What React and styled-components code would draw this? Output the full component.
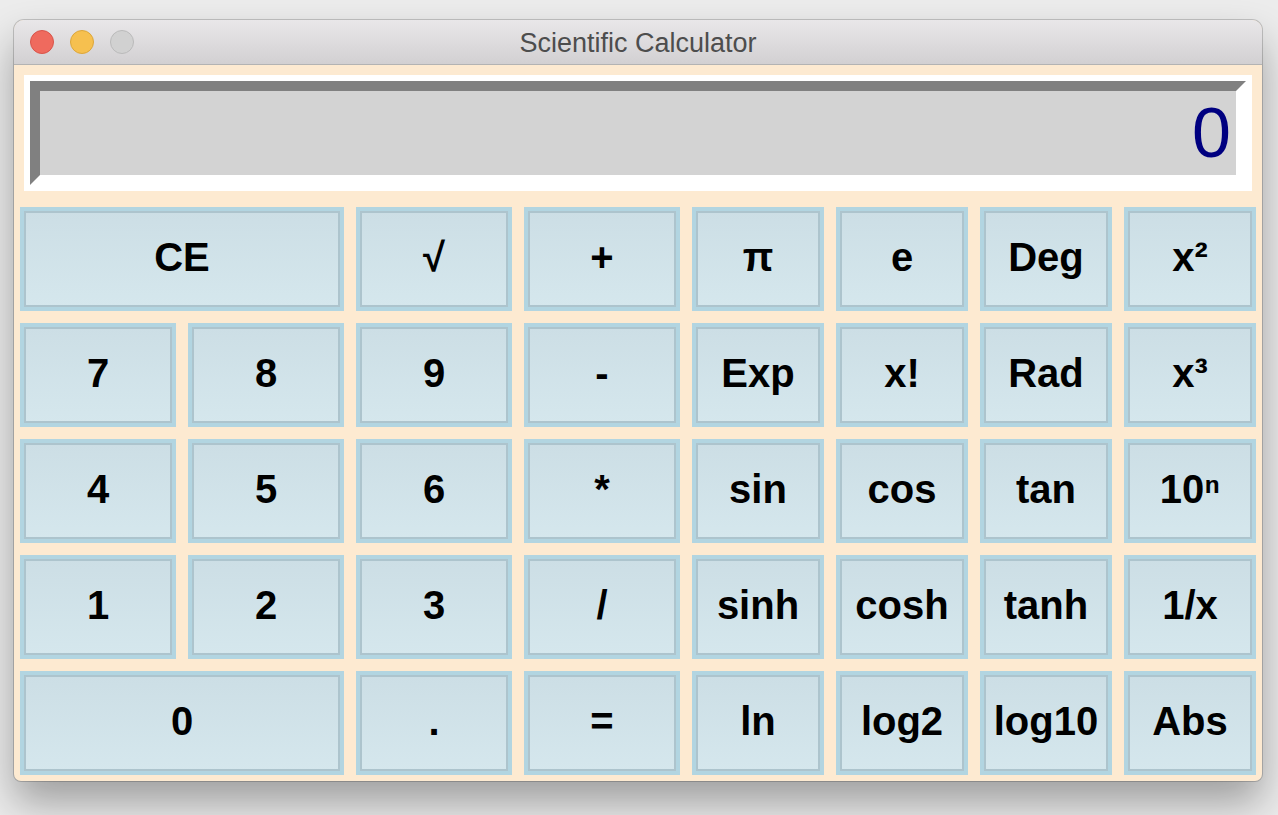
import React from "react";
import styled, { createGlobalStyle } from "styled-components";

const Global = createGlobalStyle`
  html, body { margin: 0; padding: 0; }
  body {
    background: #ececec;
    font-family: "Liberation Sans", Arial, sans-serif;
    width: 1278px;
    height: 815px;
    overflow: hidden;
  }
`;

const Page = styled.div`
  padding: 20px 0 0 14px;
`;

const Window = styled.div`
  width: 1248px;
  display: flex;
  flex-direction: column;
  border-radius: 10px 10px 7px 7px;
  overflow: hidden;
  background: #fdead1;
  box-shadow: 0 0 0 1px rgba(0, 0, 0, 0.18), 0 22px 40px rgba(0, 0, 0, 0.33);
`;

const TitleBar = styled.div`
  height: 44px;
  display: flex;
  align-items: center;
  position: relative;
  background: linear-gradient(#e9e7e9, #d2d0d2);
  border-bottom: 1px solid #b3b3b3;
`;

const Lights = styled.div`
  display: flex;
  gap: 16px;
  padding-left: 16px;
`;

const Light = styled.span`
  width: 22px;
  height: 22px;
  border-radius: 50%;
  background: ${(p) => p.$bg};
  border: 1px solid ${(p) => p.$bd};
`;

const Title = styled.div`
  position: absolute;
  left: 0;
  right: 0;
  top: 8px;
  text-align: center;
  font-size: 27px;
  line-height: 30px;
  color: #4d4d4d;
  pointer-events: none;
`;

const Body = styled.div`
  display: flex;
  flex-direction: column;
  padding: 10px 6px 6px;
`;

const DisplayBox = styled.div`
  margin: 0 4px 16px;
  background: #fff;
  padding: 6px;
`;

const Field = styled.div`
  height: 84px;
  background: #d3d3d3;
  border-style: solid;
  border-width: 10px;
  border-color: #808080 #fff #fff #808080;
  display: flex;
  align-items: center;
  justify-content: flex-end;
  padding-right: 5px;
  color: #000080;
  font-size: 70px;
  line-height: 1;
`;

const Grid = styled.div`
  display: grid;
  grid-template-columns: repeat(4, 156px) repeat(4, 132px);
  grid-auto-rows: 104px;
  gap: 12px;
`;

const Key = styled.button`
  grid-column: span ${(p) => p.$span || 1};
  margin: 0;
  padding: 0 0 4px;
  border: 4px solid #b2d5e1;
  box-shadow: inset 0 0 0 2px #adc4cd;
  background: linear-gradient(#ccdee5, #d5e7ed);
  font-family: "Liberation Sans", Arial, sans-serif;
  font-weight: bold;
  font-size: 40px;
  color: #000;
  display: flex;
  align-items: center;
  justify-content: center;
  cursor: pointer;
`;

const rows = [
  [["CE", 2], "√", "+", "π", "e", "Deg", "x²"],
  ["7", "8", "9", "-", "Exp", "x!", "Rad", "x³"],
  ["4", "5", "6", "*", "sin", "cos", "tan", "10ⁿ"],
  ["1", "2", "3", "/", "sinh", "cosh", "tanh", "1/x"],
  [["0", 2], ".", "=", "ln", "log2", "log10", "Abs"],
];

export default function App() {
  return (
    <>
      <Global />
      <Page>
        <Window>
          <TitleBar>
            <Lights>
              <Light $bg="#ef6a5e" $bd="#d8544a" />
              <Light $bg="#f6c04f" $bd="#dca63b" />
              <Light $bg="#d1d1d1" $bd="#bababa" />
            </Lights>
            <Title>Scientific Calculator</Title>
          </TitleBar>
          <Body>
            <DisplayBox>
              <Field>0</Field>
            </DisplayBox>
            <Grid>
              {rows.flat().map((k, i) => {
                const [label, span] = Array.isArray(k) ? k : [k, 1];
                return (
                  <Key key={i} $span={span}>
                    {label}
                  </Key>
                );
              })}
            </Grid>
          </Body>
        </Window>
      </Page>
    </>
  );
}
